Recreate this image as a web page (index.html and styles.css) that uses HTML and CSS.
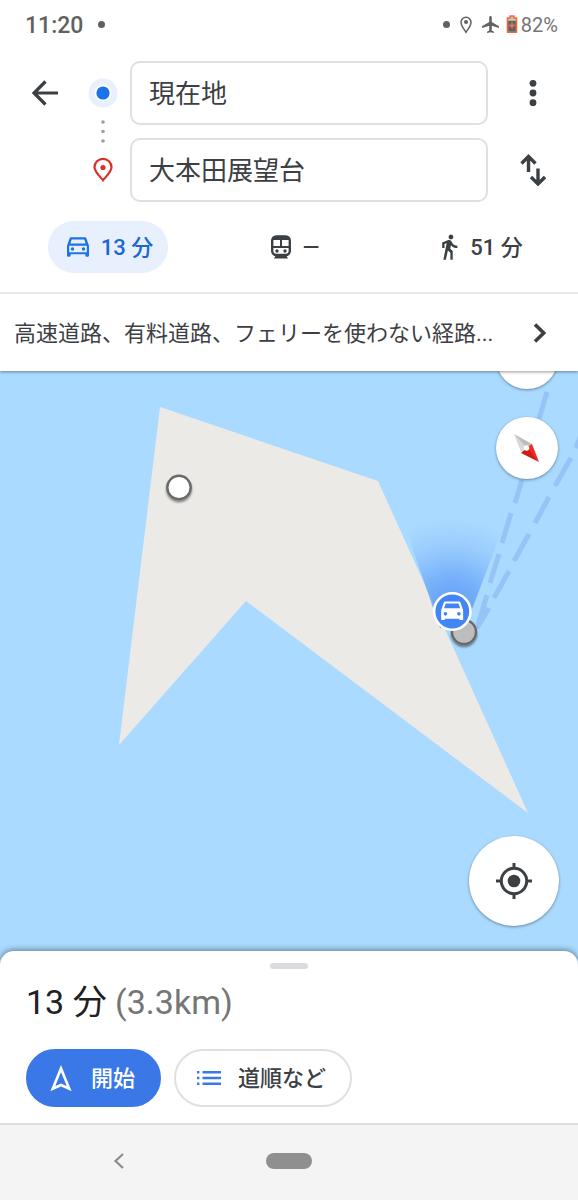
FILE: index.html
```
<!DOCTYPE html>
<html lang="ja">
<head>
<meta charset="utf-8">
<meta name="viewport" content="width=device-width, initial-scale=1">
<title>経路</title>
<link rel="stylesheet" href="styles.css">
</head>
<body>
<div class="app">
  <header class="header">
    <div class="status">
      <span class="clock">11:20</span>
      <span class="status-dot"></span>
      <div class="status-icons">
        <span class="status-dot"></span>
        <svg width="12" height="18" viewBox="0 0 12 18" fill="none" stroke="#616161" stroke-width="1.5"><path d="M6 16.300C3.500 12.500 1 9.500 1 6.200a5 5 0 0 1 10 0C11 9.500 8.500 12.500 6 16.300z"/><circle cx="6" cy="6" r="2" fill="#616161" stroke="none"/></svg>
        <svg width="17" height="17" viewBox="2 2 20 20" fill="#616161"><path d="M22 16v-2l-8.500-5V3.500C13.500 2.700 12.800 2 12 2s-1.500.7-1.500 1.500V9L2 14v2l8.500-2.500V19L8 20.500V22l4-1 4 1v-1.500L13.500 19v-5.500L22 16z"/></svg>
        <svg class="battery" width="12" height="19" viewBox="0 0 12 19"><path d="M1.500 3H4V1h4v2h2.500v14.300h-9z" fill="#c9c3c0" stroke="#f4693c" stroke-width="1.600" stroke-linejoin="round"/><path d="M2.200 5.800h7.600v10.800H2.200z" fill="#616161"/><path d="M6 7.500v6M3 10.500h6" stroke="#ff7043" stroke-width="1.500"/></svg>
        <span class="percent">82%</span>
      </div>
    </div>

    <form class="route">
      <button class="icon-btn back" type="button" aria-label="戻る">
        <svg width="28" height="28" viewBox="0 0 28 28" fill="none" stroke="#3c4043" stroke-width="3.200"><path d="M27 14H3M14.500 2.500 3 14l11.500 11.500"/></svg>
      </button>
      <svg class="markers" width="54" height="141" viewBox="0 0 54 141">
        <circle cx="27" cy="32" r="14.500" fill="#e8f0fe"/><circle cx="27" cy="32" r="8.500" fill="#fff"/><circle cx="27" cy="32" r="6.600" fill="#1a73e8"/>
        <g fill="#9aa0a6"><circle cx="27" cy="61" r="1.800"/><circle cx="27" cy="70.500" r="1.800"/><circle cx="27" cy="80" r="1.800"/></g>
        <path d="M27 119.200c-4-4.600-8.500-8.700-8.500-12.900a8.500 8.500 0 0 1 17 0c0 4.200-4.500 8.300-8.500 12.900z" fill="none" stroke="#d93025" stroke-width="2.200"/><circle cx="27" cy="106.500" r="2.600" fill="#d93025"/>
      </svg>
      <input class="field" type="text" value="現在地" aria-label="出発地">
      <button class="icon-btn" type="button" aria-label="メニュー">
        <svg width="8" height="28" viewBox="0 0 8 28" fill="#3c4043"><circle cx="4" cy="4.300" r="3.400"/><circle cx="4" cy="14" r="3.400"/><circle cx="4" cy="23.700" r="3.400"/></svg>
      </button>
      <input class="field destination" type="text" value="大本田展望台" aria-label="目的地">
      <button class="icon-btn swap" type="button" aria-label="入れ替え">
        <svg width="26" height="32" viewBox="0 0 26 32" fill="none" stroke="#3c4043" stroke-width="3.400"><path d="M8.500 18V2.500M1.500 9.500l7-7 7 7M18 14.500V30M11 23l7 7 7-7"/></svg>
      </button>
    </form>

    <nav class="modes" aria-label="移動手段">
      <button class="mode selected" type="button">
        <svg width="22" height="20" viewBox="3 5 18 16" fill="#1a73e8"><path fill-rule="evenodd" d="M18.920 6.010C18.720 5.420 18.160 5 17.500 5h-11c-.66 0-1.210.42-1.420 1.010L3 12v8c0 .55.450 1 1 1h1c.55 0 1-.45 1-1v-1h12v1c0 .55.450 1 1 1h1c.55 0 1-.45 1-1v-8l-2.080-5.990zM6.850 6.800h10.290l1.040 3.400H5.810l1.040-3.400zM19.200 17.200H4.800V12h14.400v5.200z"/><circle cx="7.500" cy="14.600" r="1.400"/><circle cx="16.500" cy="14.600" r="1.400"/></svg>
        <span class="label">13 分</span>
      </button>
      <button class="mode" type="button" aria-label="公共交通機関">
        <svg width="20" height="24" viewBox="0 0 20 24"><rect x="1.200" y="1.500" width="17.600" height="18.500" rx="4" fill="#fff" stroke="#3c4043" stroke-width="2.400"/><path d="M2 3.500Q3 .7 10 .7t8 2.800V5H2zM9 4h2v8H9zM2 11h16v2H2zM5 20h10l2 3.500H3z" fill="#3c4043"/><circle cx="6" cy="16" r="1.700" fill="#3c4043"/><circle cx="14" cy="16" r="1.700" fill="#3c4043"/></svg>
        <span>—</span>
      </button>
      <button class="mode" type="button">
        <svg width="17" height="27" viewBox="5 1 14.500 23" fill="#3c4043"><path d="M13.500 5.500c1.100 0 2-.9 2-2s-.9-2-2-2-2 .9-2 2 .9 2 2 2zM9.800 8.900 7 23h2.100l1.800-8 2.100 2v6h2v-7.500l-2.100-2 .6-3C14.800 12 16.800 13 19 13v-2c-1.900 0-3.500-1-4.300-2.400l-1-1.600c-.4-.6-1-1-1.700-1-.3 0-.5.100-.8.100L6 8.300V13h2V9.600l1.800-.7z"/></svg>
        <span class="label">51 分</span>
      </button>
    </nav>

    <button class="options" type="button">
      <span class="options-text label">高速道路、有料道路、フェリーを使わない経路...</span>
      <svg width="14" height="20" viewBox="0 0 14 20" fill="none" stroke="#3c4043" stroke-width="3.600"><path d="m2 1.500 8.700 8.500L2 18.500"/></svg>
    </button>
  </header>

  <main class="map">
    <svg class="map-canvas" viewBox="0 371 578 594" preserveAspectRatio="xMidYMid slice">
      <defs>
        <radialGradient id="beam" gradientUnits="userSpaceOnUse" cx="452" cy="612" r="94">
          <stop offset="0" stop-color="#4285f4" stop-opacity=".75"/>
          <stop offset=".35" stop-color="#4285f4" stop-opacity=".5"/>
          <stop offset=".7" stop-color="#4285f4" stop-opacity=".16"/>
          <stop offset="1" stop-color="#4285f4" stop-opacity="0"/>
        </radialGradient>
        <filter id="shade" x="-30%" y="-30%" width="160%" height="170%"><feDropShadow dx="0" dy="2" stdDeviation="1.200" flood-color="#000" flood-opacity=".45"/></filter>
      </defs>
      <path fill="#aadaff" d="M-600-200h1800v1800H-600z"/>
      <path fill="#ebeae7" d="m160 407 218 74 150 332-282-212-127 144z"/>
      <path stroke="#96c4f6" stroke-width="5" fill="none" d="m547 392-8 27M522 480l-7 23M511 513l-9 30M499 554l-9 29M487 595l-9 30M582 432l-6 16M571 458l-16 28M549 497l-14 26M529 534l-15 27M509 571l-15 27M489 608l-12 20"/>
      <path fill="url(#beam)" d="M440 628 401 515Q452 495 509 512L466 625z"/>
      <circle cx="464" cy="632" r="12" fill="#bdbdbd" stroke="#696969" stroke-width="2.400" filter="url(#shade)"/>
      <circle cx="179" cy="487.500" r="11.700" fill="#fff" stroke="#696969" stroke-width="2.400" filter="url(#shade)"/>
      <circle cx="452.300" cy="611.500" r="18.200" fill="#4285f4" stroke="#fff" stroke-width="2.600"/>
      <g transform="translate(437.500 595.500) scale(1.220)"><path fill="#fff" d="M18.920 6.010C18.720 5.420 18.160 5 17.500 5h-11c-.66 0-1.210.42-1.420 1.010L3 12v8h3v-1h12v1h3v-8l-2.080-5.990z"/><path d="M6.800 6.500h10.400l1.400 4H5.400z" fill="#4285f4"/><circle cx="6.500" cy="15" r="1.500" fill="#4285f4"/><circle cx="17.500" cy="15" r="1.500" fill="#4285f4"/></g>
    </svg>
    <div class="map-tools">
      <button class="round" type="button" aria-label="レイヤ"></button>
      <button class="round" type="button" aria-label="コンパス">
        <svg width="30" height="32" viewBox="0 0 30 32"><path d="m2 2 18 10-5.500 5z" fill="#bdbdbd"/><path d="m2 2 7 18 6-4z" fill="#d9d9d9"/><path d="m20 12 7 18-13-14z" fill="#ee2a24"/><path d="m9 21 18 9-12-14.500z" fill="#d01b16"/><circle cx="14.500" cy="16" r="2.800" fill="#fff"/></svg>
      </button>
    </div>
    <button class="round locate" type="button" aria-label="現在地を表示">
      <svg width="36" height="36" viewBox="0 0 36 36" fill="none" stroke="#3c4043" stroke-width="3"><circle cx="18" cy="18" r="12.700"/><circle cx="18" cy="18" r="6.300" fill="#3c4043" stroke="none"/><path d="M18 0v5M18 31v5M0 18h5M31 18h5"/></svg>
    </button>
  </main>

  <section class="sheet">
    <div class="handle"></div>
    <h1 class="summary">13 分 <span class="distance">(3.3km)</span></h1>
    <div class="actions">
      <button class="action primary" type="button">
        <svg width="22" height="26" viewBox="0 0 22 26" fill="none" stroke="#fff" stroke-width="2.600"><path d="M11 3.500 2.800 23.700 11 20l8.200 3.700z"/></svg>
        <span class="label">開始</span>
      </button>
      <button class="action" type="button">
        <svg width="26" height="16" viewBox="0 0 26 16" fill="#3b78e7"><path d="M1 1h2.400v2.400H1zM1 6.800h2.400v2.400H1zM1 12.600h2.400V15H1zM6.500 1H25v2.400H6.500zM6.500 6.800H25v2.400H6.500zM6.500 12.600H25V15H6.500z"/></svg>
        <span class="label">道順など</span>
      </button>
    </div>
  </section>

  <footer class="system-nav">
    <button class="icon-btn" type="button" aria-label="前へ">
      <svg width="12" height="16" viewBox="0 0 12 16" fill="none" stroke="#8c8c8c" stroke-width="2.200"><path d="M10 1 2.500 8l7.500 7"/></svg>
    </button>
    <button class="home" type="button" aria-label="ホーム"></button>
  </footer>
</div>
</body>
</html>
```
FILE: styles.css
```
* {
  box-sizing: border-box;
}

body {
  margin: 0;
  background: #fff;
  color: #3c4043;
  font-family: Roboto, "Noto Sans CJK JP", sans-serif;
  font-size: 22px;
}

button,
input {
  margin: 0;
  padding: 0;
  border: 0;
  background: none;
  color: inherit;
  font: inherit;
}

svg {
  display: block;
  flex: none;
}

.app {
  display: flex;
  flex-direction: column;
  min-height: 100vh;
}

.header {
  position: relative;
  z-index: 2;
  background: #fff;
  box-shadow: 0 1px 3px rgba(0, 0, 0, 0.4);
}

.status {
  display: flex;
  align-items: center;
  gap: 15px;
  height: 49px;
  padding: 0 20px 0 25px;
  color: #616161;
}

.clock {
  padding-top: 2px;
  font-size: 23px;
  font-weight: 500;
}

.status-dot {
  width: 7px;
  height: 7px;
  border-radius: 50%;
  background: #616161;
}

.status-icons {
  display: flex;
  align-items: center;
  gap: 10px;
  margin-left: auto;
}

.battery {
  margin-left: -3px;
}

.percent {
  margin-left: -7px;
  color: #757575;
  font-size: 20px;
}

.route {
  display: grid;
  grid-template-columns: 62px 54px 1fr 90px;
  grid-template-rows: 64px 64px;
  row-gap: 13px;
  padding: 12px 0 0 14px;
}

.icon-btn {
  display: flex;
  align-items: center;
  justify-content: center;
}

.label {
  padding-bottom: 4px;
}

.markers {
  grid-column: 2;
  grid-row: 1 / 3;
}

.field {
  width: 100%;
  min-width: 0;
  padding: 0 17px 3px;
  border: 2px solid #dfe0e5;
  border-radius: 10px;
  font-size: 26px;
}

.destination {
  grid-column: 3;
}

.modes {
  display: flex;
  justify-content: space-between;
  padding: 19px 36px 19px 48px;
  border-bottom: 2px solid #e8eaed;
}

.mode {
  display: flex;
  align-items: center;
  justify-content: center;
  gap: 12px;
  width: 120px;
  height: 52px;
  border-radius: 26px;
  font-weight: 500;
}

.selected {
  padding-left: 4px;
  background: #e8f0fe;
  color: #1967d2;
}

.options {
  display: flex;
  align-items: center;
  justify-content: space-between;
  width: 100%;
  height: 77px;
  padding: 0 31px 0 14px;
  text-align: left;
}

.options-text {
  overflow: hidden;
  white-space: nowrap;
  text-overflow: ellipsis;
}

.map {
  position: relative;
  flex: 1;
  min-height: 400px;
  overflow: hidden;
  background: #aadaff;
}

.map-canvas {
  position: absolute;
  inset: 0;
  width: 100%;
  height: 100%;
}

.map-tools {
  position: absolute;
  top: -44px;
  right: 20px;
  display: grid;
  gap: 28px;
}

.round {
  display: flex;
  align-items: center;
  justify-content: center;
  width: 62px;
  height: 62px;
  border-radius: 50%;
  background: #fff;
  box-shadow: 0 1px 3px rgba(0, 0, 0, 0.4);
}

.locate {
  position: absolute;
  right: 19px;
  bottom: 39px;
  width: 90px;
  height: 90px;
}

.sheet {
  position: relative;
  margin-top: -14px;
  padding: 12px 26px 16px;
  border-radius: 14px 14px 0 0;
  background: #fff;
  box-shadow: 0 -1px 6px rgba(0, 0, 0, 0.45);
}

.handle {
  width: 38px;
  height: 6px;
  margin: 0 auto;
  border-radius: 3px;
  background: #dadce0;
}

.summary {
  margin: 9px 0 23px;
  color: #202124;
  font-size: 34px;
  font-weight: 400;
  line-height: 48px;
}

.distance {
  color: #757575;
}

.actions {
  display: flex;
  gap: 13px;
}

.action {
  display: flex;
  align-items: center;
  gap: 16px;
  height: 58px;
  padding: 0 24px 0 20px;
  border: 2px solid #e0e0e0;
  border-radius: 29px;
  font-weight: 500;
}

.primary {
  gap: 19px;
  padding: 0 24px 0 22px;
  border-color: #3b78e7;
  background: #3b78e7;
  color: #fff;
}

.system-nav {
  position: relative;
  display: grid;
  grid-template-columns: 1fr 104px 1fr;
  align-items: center;
  height: 77px;
  padding-bottom: 4px;
  border-top: 2px solid #e0e0e0;
  background: #f4f4f4;
}

.home {
  justify-self: center;
  width: 46px;
  height: 16px;
  border-radius: 8px;
  background: #8f8f8f;
}
```
